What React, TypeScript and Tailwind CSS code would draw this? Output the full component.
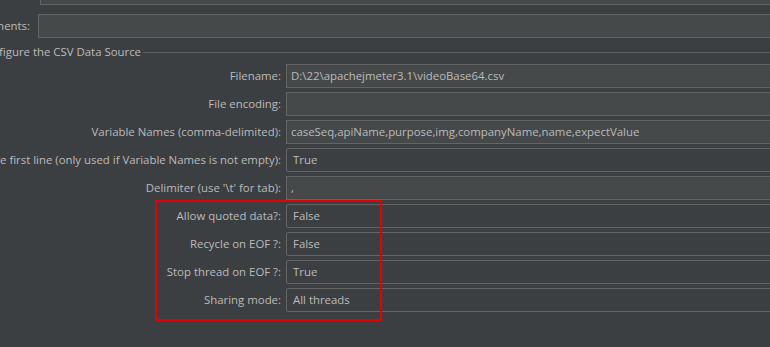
const rows: { label: string; value: string; kind: 'text' | 'combo' }[] = [
  { label: 'Filename:', value: 'D:\\22\\apachejmeter3.1\\videoBase64.csv', kind: 'text' },
  { label: 'File encoding:', value: '', kind: 'text' },
  { label: 'Variable Names (comma-delimited):', value: 'caseSeq,apiName,purpose,img,companyName,name,expectValue', kind: 'text' },
  { label: 'Ignore first line (only used if Variable Names is not empty):', value: 'True', kind: 'combo' },
  { label: "Delimiter (use '\\t' for tab):", value: ',', kind: 'text' },
  { label: 'Allow quoted data?:', value: 'False', kind: 'combo' },
  { label: 'Recycle on EOF ?:', value: 'False', kind: 'combo' },
  { label: 'Stop thread on EOF ?:', value: 'True', kind: 'combo' },
  { label: 'Sharing mode:', value: 'All threads', kind: 'combo' },
];

function Field({ value, kind }: { value: string; kind: 'text' | 'combo' }) {
  return (
    <div
      className={
        'flex h-[24px] flex-1 items-center border border-[#646464] ' +
        (kind === 'text' ? 'bg-[#45494a] pl-[4px]' : 'rounded-l-[2px] bg-[#3c3f41] pl-[6px]')
      }
    >
      <span className="whitespace-nowrap">{value}</span>
    </div>
  );
}

export default function App() {
  return (
    <div
      className="relative h-[347px] w-[770px] overflow-hidden bg-[#3c3f41] text-[11.4px] leading-none text-[#bbbbbb]"
      style={{ fontFamily: '"Open Sans", "Noto Sans", sans-serif' }}
    >
      {/* Name field, mostly scrolled out */}
      <div className="-mr-[10px] -mt-[19px] ml-[40px] h-[24px] border border-[#646464] bg-[#45494a]" />

      {/* Comments */}
      <div className="-mr-[10px] mt-[9px] flex">
        <div className="flex w-[30px] shrink-0 items-center justify-end whitespace-nowrap">Comments:</div>
        <div className="ml-[8px] h-[24px] flex-1 border border-[#646464] bg-[#45494a]" />
      </div>

      {/* Group title */}
      <div className="-ml-[22px] mt-[6px] flex h-[16px] items-center">
        <span className="shrink-0 whitespace-nowrap pr-[2px]">Configure the CSV Data Source</span>
        <div className="h-px flex-1 bg-[#5e6060]" />
      </div>

      <div className="-mr-[10px] mt-[4px] flex flex-col gap-[4px]">
        {rows.map((r) => (
          <div key={r.label} className="flex">
            <div className="flex w-[281px] shrink-0 items-center justify-end whitespace-nowrap">{r.label}</div>
            <div className="ml-[5px] flex flex-1">
              <Field value={r.value} kind={r.kind} />
            </div>
          </div>
        ))}
      </div>

      {/* red highlight */}
      <div className="absolute left-[155px] top-[200px] h-[121px] w-[227px] border-[2px] border-[#e60000]" />
    </div>
  );
}
